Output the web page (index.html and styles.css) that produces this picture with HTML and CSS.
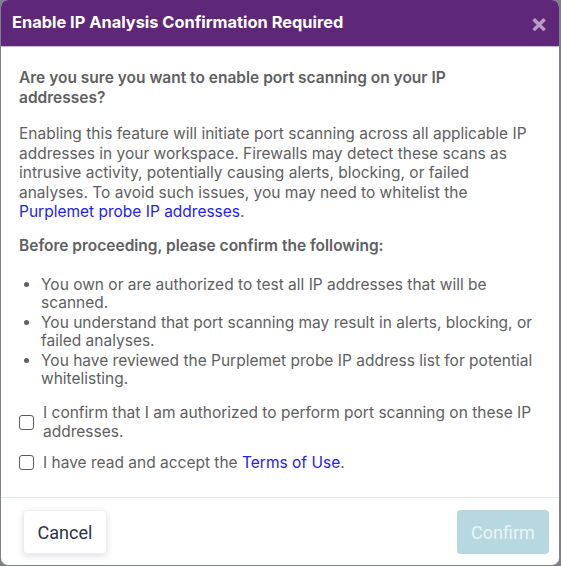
FILE: index.html
```html
<!DOCTYPE html>
<html>
<head>
<meta charset="utf-8">
<link rel="stylesheet" href="styles.css">
</head>
<body>
<div class="modal">
  <div class="modal-header">
    <h2 class="modal-title">Enable IP Analysis Confirmation Required</h2>
    <span class="close">&times;</span>
  </div>
  <div class="modal-body">
    <p class="question q1">Are you sure you want to enable port scanning on your IP addresses?</p>
    <p class="text">Enabling this feature will initiate port scanning across all applicable IP addresses in your workspace. Firewalls may detect these scans as intrusive activity, potentially causing alerts, blocking, or failed analyses. To avoid such issues, you may need to whitelist the <a href="#">Purplemet probe IP addresses</a>.</p>
    <p class="question q2">Before proceeding, please confirm the following:</p>
    <ul class="list">
      <li>You own or are authorized to test all IP addresses that will be scanned.</li>
      <li>You understand that port scanning may result in alerts, blocking, or failed analyses.</li>
      <li>You have reviewed the Purplemet probe IP address list for potential whitelisting.</li>
    </ul>
    <label class="check check-first">
      <span class="box"></span>
      <span class="check-text">I confirm that I am authorized to perform port scanning on these IP addresses.</span>
    </label>
    <label class="check">
      <span class="box"></span>
      <span class="check-text">I have read and accept the <a href="#">Terms of Use</a>.</span>
    </label>
  </div>
  <div class="modal-footer">
    <button class="btn btn-cancel">Cancel</button>
    <button class="btn btn-confirm">Confirm</button>
  </div>
</div>
</body>
</html>
```
FILE: styles.css
```css
html, body {
  margin: 0;
  padding: 0;
  background: #7b8188;
  height: 566px;
  overflow: hidden;
}
body {
  font-family: Inter, "Liberation Sans", sans-serif;
  padding: 0 2px 1px 1px;
  box-sizing: border-box;
}
.modal {
  background: #fff;
  border-radius: 7px;
  height: 565px;
  display: flex;
  flex-direction: column;
  overflow: hidden;
}
.modal-header {
  background: #5e2777;
  height: 46px;
  border-bottom: 1px solid #c9b8d6;
  display: flex;
  align-items: center;
  justify-content: space-between;
  padding: 0 11px 0 11px;
  flex-shrink: 0;
}
.modal-title {
  margin: 0;
  color: #fff;
  font-size: 16.4px;
  font-weight: 700;
  position: relative;
  top: -1px;
}
.close {
  color: #b99cc7;
  font-size: 26px;
  font-weight: 700;
  line-height: 1;
  position: relative;
  top: 1px;
}
.modal-body {
  padding: 21px 26px 0 18px;
  color: #606060;
  font-size: 15.5px;
  line-height: 20px;
  flex: 1;
}
.modal-body p {
  margin: 0;
}
.question {
  font-weight: 600;
}
.text {
  line-height: 19.5px;
  margin-top: 16px !important;
}
.q2 {
  margin-top: 14px !important;
}
a {
  color: #2222ee;
  text-decoration: none;
}
.list {
  margin: 20px 0 0 0;
  padding-left: 22px;
  line-height: 18px;
}
.list li {
  margin-bottom: 2px;
}
.list li:last-child {
  margin-bottom: 0;
}
.check {
  display: flex;
  align-items: center;
  gap: 9px;
  margin-top: 12px;
  line-height: 19px;
}
.check-first {
  margin-top: 15.5px;
}
.box {
  width: 13px;
  height: 13px;
  border: 1.5px solid #5c5c5c;
  border-radius: 3px;
  flex-shrink: 0;
}
.modal-footer {
  border-top: 1px solid #e4e6ee;
  height: 67px;
  display: flex;
  align-items: center;
  justify-content: space-between;
  padding: 0 10px 0 22px;
  flex-shrink: 0;
}
.btn {
  font-family: Roboto, Inter, sans-serif;
  font-size: 18px;
  height: 44px;
  border-radius: 4px;
  border: none;
  margin-top: 1px;
}
.btn-cancel {
  background: #fff;
  color: #2b3446;
  width: 84px;
  border: 1px solid #eceef4;
  box-shadow: 0 2px 6px rgba(40, 50, 80, 0.15);
}
.btn-confirm {
  background: #b8d8e0;
  color: #eaf4f7;
  width: 92px;
}
```
